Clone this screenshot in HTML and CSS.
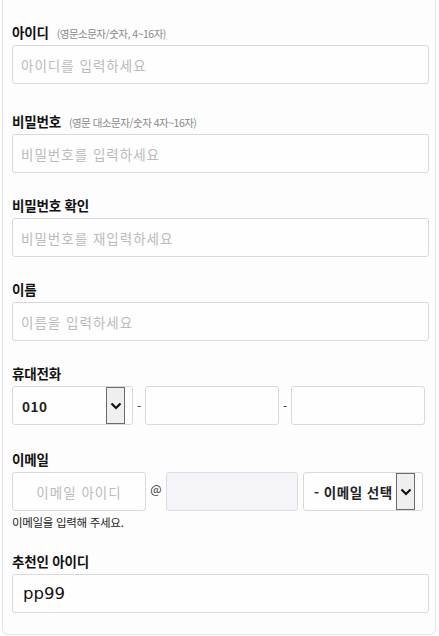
FILE: index.html
```html
<!DOCTYPE html>
<html lang="ko">
<head>
<meta charset="utf-8">
<link rel="stylesheet" href="styles.css">
</head>
<body>
<div class="card">
  <div class="field field-first">
    <div class="label">아이디<span class="hint">(영문소문자/숫자, 4~16자)</span></div>
    <div class="input"><span class="ph">아이디를 입력하세요</span></div>
  </div>
  <div class="field">
    <div class="label">비밀번호<span class="hint">(영문 대소문자/숫자 4자~16자)</span></div>
    <div class="input"><span class="ph">비밀번호를 입력하세요</span></div>
  </div>
  <div class="field">
    <div class="label">비밀번호 확인</div>
    <div class="input"><span class="ph">비밀번호를 재입력하세요</span></div>
  </div>
  <div class="field">
    <div class="label">이름</div>
    <div class="input"><span class="ph">이름을 입력하세요</span></div>
  </div>
  <div class="field field-phone">
    <div class="label">휴대전화</div>
    <div class="row">
      <div class="select sel-phone"><span class="sel-text">010</span><span class="arrow"><svg width="12" height="8" viewBox="0 0 12 8"><path d="M1.5 1.5 L6 6 L10.5 1.5" fill="none" stroke="#111" stroke-width="2.2"/></svg></span></div>
      <span class="sep">-</span>
      <div class="input in-phone"></div>
      <span class="sep">-</span>
      <div class="input in-phone"></div>
    </div>
  </div>
  <div class="field field-email">
    <div class="label">이메일</div>
    <div class="row">
      <div class="input in-email center"><span class="ph">이메일 아이디</span></div>
      <span class="at">@</span>
      <div class="input in-domain"></div>
      <div class="select sel-email"><span class="sel-text">- 이메일 선택</span><span class="arrow"><svg width="12" height="8" viewBox="0 0 12 8"><path d="M1.5 1.5 L6 6 L10.5 1.5" fill="none" stroke="#111" stroke-width="2.2"/></svg></span></div>
    </div>
    <div class="help">이메일을 입력해 주세요.</div>
  </div>
  <div class="field">
    <div class="label">추천인 아이디</div>
    <div class="input"><span class="val">pp99</span></div>
  </div>
</div>
</body>
</html>
```
FILE: styles.css
```css
html, body {
  margin: 0;
  padding: 0;
  background: #ffffff;
}
body {
  font-family: "Noto Sans CJK KR", "Noto Sans", sans-serif;
  color: #111;
  padding: 0 2px 0 2px;
}
.card {
  width: 434px;
  height: 635px;
  box-sizing: border-box;
  border: 1px solid #e2e4ea;
  border-top: none;
  border-radius: 0 0 6px 6px;
  background: #fdfdfd;
  padding: 22px 6px 0 9px;
}
.field {
  margin-bottom: 22px;
}
.field-first {
  margin-bottom: 27px;
}
.field-phone {
  margin-bottom: 24px;
}
.label {
  height: 20px;
  line-height: 20px;
  font-size: 13.5px;
  font-weight: 700;
  margin-bottom: 3px;
  letter-spacing: -0.2px;
}
.hint {
  font-size: 10.5px;
  font-weight: 400;
  color: #8a8a8a;
  margin-left: 8px;
  letter-spacing: -0.5px;
}
.input {
  height: 39px;
  box-sizing: border-box;
  border: 1px solid #d9d9d9;
  border-radius: 3px;
  background: #fefefe;
  display: flex;
  align-items: center;
  padding-left: 8px;
}
.ph {
  font-size: 13.5px;
  color: #bbbbbb;
  letter-spacing: 1px;
}
.val {
  font-family: "DejaVu Sans", "Liberation Sans", sans-serif;
  font-weight: 400;
  font-size: 16.5px;
  color: #111;
  padding-left: 2px;
}
.row {
  display: flex;
  align-items: center;
}
.select {
  height: 39px;
  box-sizing: border-box;
  border: 1px solid #d9d9d9;
  border-radius: 3px;
  background: #fefefe;
  display: flex;
  align-items: center;
  justify-content: space-between;
  padding: 0 7px 0 9px;
}
.sel-text {
  font-size: 13.5px;
  font-weight: 700;
  color: #222;
  letter-spacing: 0.5px;
}
.arrow {
  width: 19px;
  height: 37px;
  box-sizing: border-box;
  border: 1px solid #6b6b6b;
  background: #efefef;
  display: flex;
  align-items: center;
  justify-content: center;
}
.sel-phone {
  width: 121px;
}
.sep {
  width: 12px;
  text-align: center;
  font-size: 12px;
  color: #333;
}
.in-phone {
  width: 134px;
}
.in-email {
  width: 134px;
  justify-content: center;
  padding-left: 0;
}
.at {
  width: 20px;
  text-align: center;
  font-size: 12px;
  color: #333;
  margin-top: -6px;
}
.in-domain {
  width: 132px;
  background: #f4f4f9;
  border-color: #dcdce2;
  margin-right: 5px;
}
.sel-email {
  width: 120px;
  padding-left: 10px;
}
.field-email {
  margin-bottom: 21px;
}
.help {
  font-size: 11.5px;
  color: #222;
  margin-top: 3px;
  line-height: 16px;
  letter-spacing: -0.3px;
}
```
